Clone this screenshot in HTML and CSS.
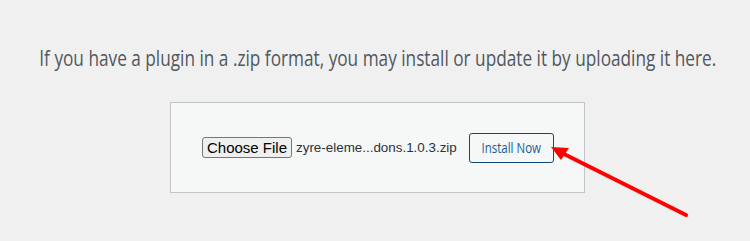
FILE: index.html
```html
<!DOCTYPE html>
<html>
<head>
<meta charset="utf-8">
<link rel="stylesheet" href="styles.css">
</head>
<body>
<div class="page">
  <p class="intro"><span class="intro-text">If you have a plugin in a .zip format, you may install or update it by uploading it here.</span></p>
  <form class="upload">
    <span class="file-btn">Choose File</span>
    <span class="file-name">zyre-eleme...dons.1.0.3.zip</span>
    <span class="install-btn"><span class="install-text">Install Now</span></span>
  </form>
  <svg class="arrow" width="750" height="241" viewBox="0 0 750 241">
    <line x1="562" y1="153" x2="686" y2="215" stroke="#ff0000" stroke-width="4" stroke-linecap="round"/>
    <polygon points="551,147 569,148 561,160" fill="#ff0000"/>
  </svg>
</div>
</body>
</html>
```
FILE: styles.css
```css
html, body {
  margin: 0;
  padding: 0;
  background: #f0f0f1;
}
.page {
  position: relative;
  width: 750px;
  height: 241px;
  overflow: hidden;
}
.intro {
  margin: 0;
  padding: 44px 0 0 5px;
  height: 58px;
  display: flex;
  justify-content: center;
  font-family: "Open Sans", sans-serif;
  font-size: 21px;
  line-height: 28px;
  color: #50575e;
  white-space: nowrap;
}
.intro-text {
  display: inline-block;
  flex: none;
  transform: scaleX(0.82);
  transform-origin: center;
}
.upload {
  margin: 0 0 0 170px;
  width: 382px;
  height: 89px;
  border: 1px solid #c3c4c7;
  background: #f6f7f7;
  display: flex;
  align-items: center;
  padding-left: 31px;
}
.file-btn {
  box-sizing: border-box;
  height: 21px;
  width: 90px;
  border: 1px solid #767676;
  border-radius: 3px;
  background: #efefef;
  font-family: "Liberation Sans", Arial, sans-serif;
  font-size: 15px;
  line-height: 19px;
  color: #000;
  text-align: center;
}
.file-name {
  margin-left: 4px;
  font-family: "Liberation Sans", Arial, sans-serif;
  font-size: 13.4px;
  color: #2c3338;
  white-space: nowrap;
}
.install-btn {
  box-sizing: border-box;
  margin-left: 12px;
  height: 30px;
  width: 85px;
  border: 1px solid #0a4b78;
  border-radius: 3px;
  background: #f6f7f7;
  display: flex;
  align-items: center;
  justify-content: center;
  font-family: "Open Sans", sans-serif;
  font-size: 14px;
  color: #135e96;
  white-space: nowrap;
}
.install-text {
  display: inline-block;
  transform: scaleX(0.82);
}
.arrow {
  position: absolute;
  left: 0;
  top: 0;
}
```
